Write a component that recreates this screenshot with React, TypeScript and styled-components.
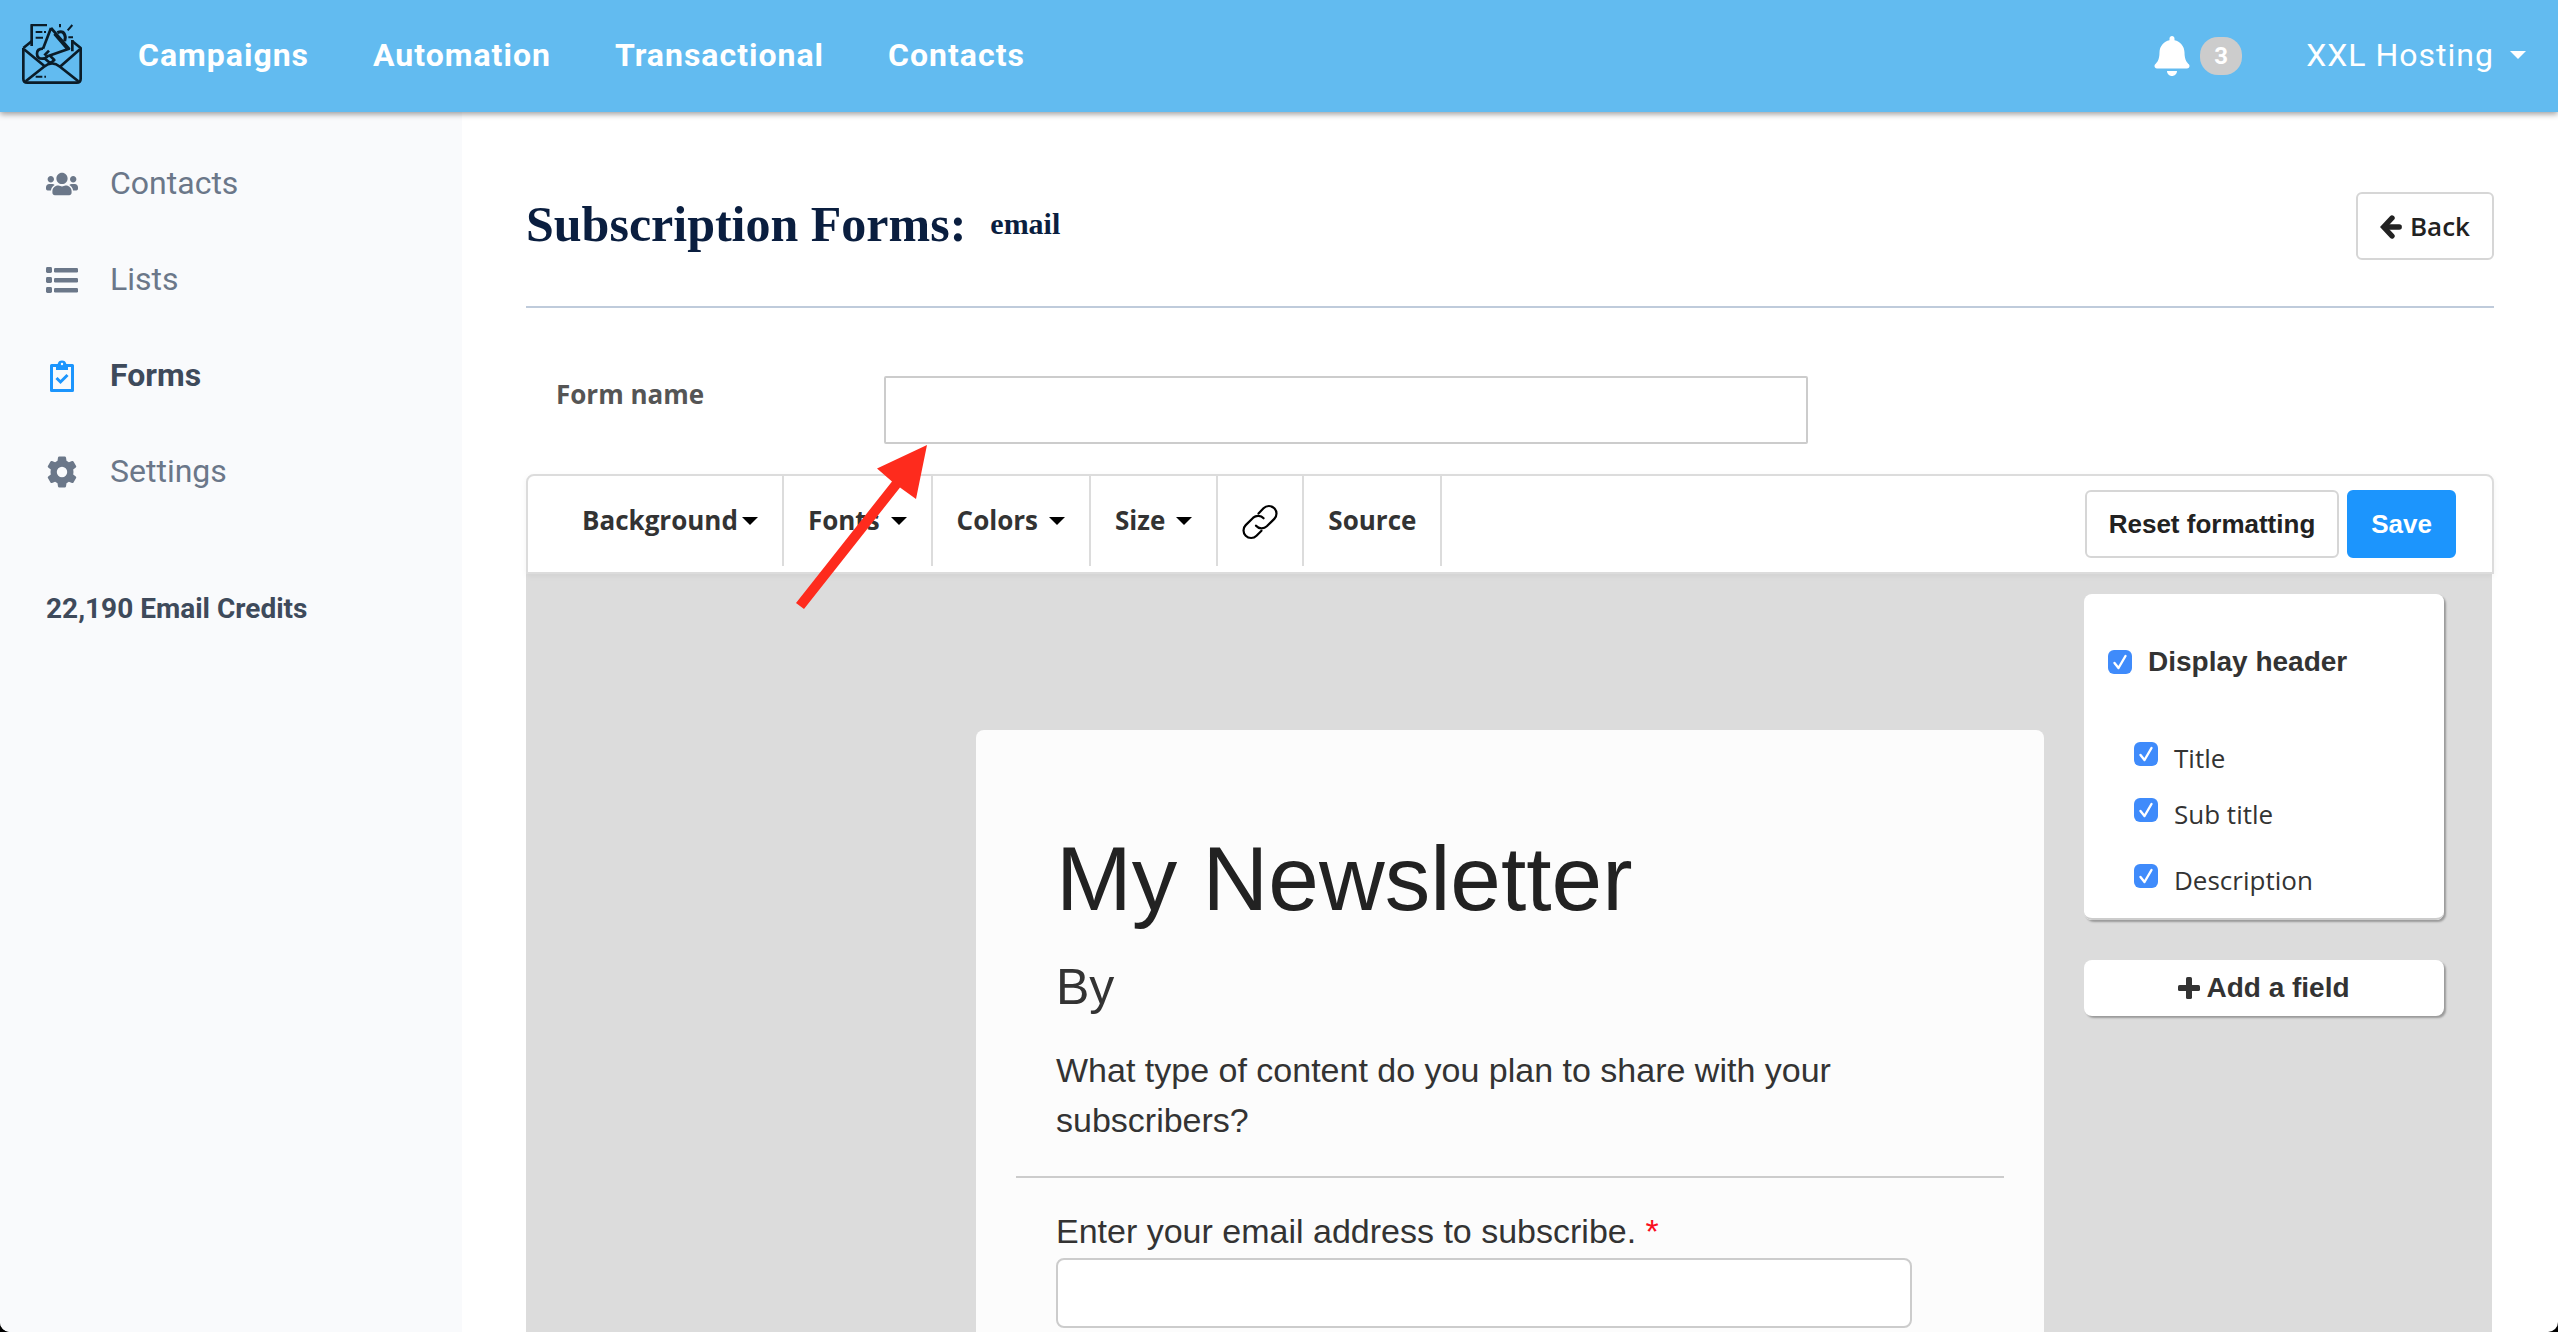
import React from "react";
import styled, { createGlobalStyle, css } from "styled-components";
import { FaUsers, FaBell } from "react-icons/fa";

const roboto = `Roboto, "Noto Sans", sans-serif`;
const openSans = `"Open Sans", "Noto Sans", sans-serif`;
const helvetica = `"Liberation Sans", Arial, sans-serif`;
const serif = `"Liberation Serif", "Times New Roman", serif`;

const GlobalStyle = createGlobalStyle`
  *, *::before, *::after { box-sizing: border-box; }
  html { background: #000; }
  body { margin: 0; font-family: ${openSans}; color: #333; overflow: hidden; }
  h1, h2, p { margin: 0; font-weight: 400; }
  button, input { font: inherit; color: inherit; margin: 0; }
`;

const Page = styled.div`
  position: relative;
  display: flex;
  flex-direction: column;
  height: 100vh;
  background: #fff;
  border-radius: 0 0 10px 10px;
  overflow: hidden;
`;

const TopBar = styled.header`
  position: relative;
  z-index: 2;
  flex: none;
  display: flex;
  align-items: center;
  height: 112px;
  padding: 0 32px 0 20px;
  background: #62bbf0;
  color: #fff;
  font-family: ${roboto};
  font-size: 32px;
  line-height: 40px;
  letter-spacing: 1px;
  box-shadow: 0 2px 6px rgba(0, 0, 0, 0.4);
`;

const Logo = styled.svg`
  display: block;
  width: 64px;
  height: 64px;
`;

const MainNav = styled.nav`
  display: flex;
  gap: 64px;
  margin-left: 54px;
  padding-bottom: 2px;
`;

const NavLink = styled.a`
  color: inherit;
  font-weight: 700;
  text-decoration: none;
`;

const Account = styled.div`
  display: flex;
  align-items: center;
  margin-left: auto;
`;

const AlertsButton = styled.button`
  display: flex;
  align-items: center;
  gap: 10px;
  padding: 0;
  border: 0;
  background: none;

  svg { width: 36px; height: 40px; }
`;

const Badge = styled.span`
  width: 42px;
  border-radius: 18px;
  background: #ccc;
  font-size: 24px;
  font-weight: 700;
  line-height: 38px;
  letter-spacing: 0;
  text-align: center;
`;

const AccountButton = styled.button`
  display: flex;
  align-items: center;
  gap: 16px;
  margin-left: 64px;
  padding: 0 0 2px;
  border: 0;
  background: none;
  font-weight: 400;
  letter-spacing: 1px;
`;

const Caret = styled.span`
  width: 0;
  height: 0;
  border: 8px solid transparent;
  border-top-color: currentColor;
  border-bottom-width: 0;
`;

const Body = styled.div`
  flex: 1;
  display: flex;
  min-height: 0;
`;

const Sidebar = styled.aside`
  flex: none;
  width: 462px;
  padding: 47px 46px;
  background: #f9fafc;
  font-family: ${roboto};
`;

const SideNav = styled.nav`
  display: flex;
  flex-direction: column;
  gap: 48px;
`;

const SideLink = styled.a<{ $active?: boolean }>`
  display: flex;
  align-items: center;
  gap: 32px;
  color: ${(p) => (p.$active ? "#3e4a5b" : "#6b7789")};
  font-size: 32px;
  line-height: 48px;
  font-weight: ${(p) => (p.$active ? 700 : 400)};
  text-decoration: none;

  svg {
    width: 32px;
    height: 32px;
    margin-top: 2px;
    color: ${(p) => (p.$active ? "#1c95fd" : "inherit")};
  }
`;

const Credits = styled.p`
  margin-top: 94px;
  color: #3e4a5b;
  font-size: 28px;
  line-height: 40px;
  font-weight: 700;
`;

const Main = styled.main`
  flex: 1;
  display: flex;
  flex-direction: column;
  min-width: 0;
  padding: 80px 64px 0;
`;

const PageHead = styled.div`
  flex: none;
  display: flex;
  align-items: flex-start;
  justify-content: space-between;
  padding-bottom: 46px;
  border-bottom: 2px solid #bfcbdb;
`;

const Heading = styled.div`
  display: flex;
  align-items: center;
  gap: 24px;
  color: #0a1e3f;
  font-family: ${serif};
`;

const PageTitle = styled.h1`
  font-size: 50px;
  line-height: 64px;
  font-weight: 700;
`;

const PageSubtitle = styled.h2`
  font-size: 30px;
  line-height: 64px;
  font-weight: 700;
`;

const Button = styled.button<{ $primary?: boolean }>`
  display: flex;
  align-items: center;
  gap: 8px;
  height: 68px;
  padding: 0 22px;
  border: 2px solid ${(p) => (p.$primary ? "#1c95fd" : "#d6d6d6")};
  border-radius: 6px;
  background: ${(p) => (p.$primary ? "#1c95fd" : "#fff")};
  color: ${(p) => (p.$primary ? "#fff" : "#222")};
  font-family: ${helvetica};
  font-size: 26px;
  font-weight: 700;
  white-space: nowrap;
`;

const BackButton = styled(Button)`
  font-family: ${openSans};
  font-weight: 600;

  svg { width: 22px; height: 24px; margin-top: 2px; }
`;

const NameRow = styled.div`
  flex: none;
  display: grid;
  grid-template-columns: 328px minmax(0, 924px);
  padding: 68px 0 30px 30px;
`;

const NameLabel = styled.label`
  color: #555;
  font-size: 26px;
  line-height: 36px;
  font-weight: 700;
`;

const TextInput = styled.input`
  width: 100%;
  height: 68px;
  padding: 0 16px;
  border: 2px solid #ccc;
  border-radius: 2px;
  background: #fff;
  font-size: 28px;
  outline: none;
`;

const Toolbar = styled.div`
  position: relative;
  z-index: 1;
  flex: none;
  display: flex;
  justify-content: space-between;
  height: 100px;
  padding: 0 36px 0 30px;
  border: 2px solid #dcdcdc;
  border-radius: 8px 8px 0 0;
  background: #fff;
  box-shadow: 0 2px 6px rgba(0, 0, 0, 0.05);
`;

const ToolGroup = styled.div`
  display: flex;
  height: 90px;
`;

const Tool = styled.button<{ $tight?: boolean }>`
  display: flex;
  align-items: center;
  gap: ${(p) => (p.$tight ? 4 : 11)}px;
  padding: 0 24px 2px;
  border: 0;
  border-right: 2px solid #dcdcdc;
  background: none;
  font-size: 26px;
  font-weight: 700;

  ${Caret} { margin-top: 2px; color: #000; }
  svg { width: 36px; height: 36px; margin-top: 4px; color: #000; }
`;

const Actions = styled.div`
  display: flex;
  gap: 8px;
  padding-top: 14px;
`;

const Canvas = styled.div`
  flex: 1;
  display: grid;
  grid-template-columns: minmax(0, 1fr) minmax(0, 1068px) minmax(0, 1fr);
  min-height: 0;
  margin-right: 2px;
  padding-left: 2px;
  background: #dcdcdc;
  overflow: hidden;
`;

const FormCard = styled.form`
  grid-column: 2;
  margin-top: 156px;
  padding: 97px 40px 40px;
  border-radius: 8px 8px 0 0;
  background: #fcfcfc;
  font-family: ${helvetica};
`;

const FormIntro = styled.div`
  padding: 0 40px 31px;
  border-bottom: 2px solid #ccc;
`;

const FormTitle = styled.h1`
  color: #222;
  font-size: 91px;
  line-height: 104px;
`;

const FormSubtitle = styled.h2`
  margin-top: 26px;
  font-size: 50px;
  line-height: 60px;
`;

const copy = css`
  font-size: 34px;
  line-height: 50px;
`;

const FormText = styled.p`
  margin-top: 28px;
  ${copy}
`;

const FormField = styled.div`
  display: grid;
  gap: 2px;
  padding: 28px 92px 0 40px;
`;

const FieldLabel = styled.label`
  ${copy}
`;

const Required = styled.span`
  color: #fa0f1e;
`;

const RoundInput = styled(TextInput)`
  height: 70px;
  border-radius: 8px;
`;

const SideColumn = styled.div`
  grid-column: 3;
  justify-self: end;
  width: 360px;
  margin: 20px 48px 0 0;
`;

const OptionsPanel = styled.fieldset`
  display: flex;
  flex-direction: column;
  margin: 0;
  padding: 48px 24px 22px;
  border: 0;
  border-bottom: 2px solid #ccc;
  border-radius: 8px;
  background: #fff;
  box-shadow: 2px 2px 2px rgba(0, 0, 0, 0.3);
`;

const Check = styled.label<{ $head?: boolean; $gap?: number }>`
  display: flex;
  align-items: ${(p) => (p.$head ? "center" : "flex-start")};
  gap: 16px;
  margin-left: ${(p) => (p.$head ? 0 : 26)}px;
  margin-top: ${(p) => p.$gap ?? 0}px;
  font-family: ${(p) => (p.$head ? helvetica : openSans)};
  font-size: ${(p) => (p.$head ? 28 : 26)}px;
  line-height: ${(p) => (p.$head ? 40 : 32)}px;
  font-weight: ${(p) => (p.$head ? 700 : 400)};
`;

const TickBox = styled.span`
  position: relative;
  flex: none;
  width: 24px;
  height: 24px;

  input {
    display: block;
    appearance: none;
    width: 24px;
    height: 24px;
    border-radius: 6px;
    background: #3f8bfb;
  }

  svg {
    position: absolute;
    inset: 0;
    width: 24px;
    height: 24px;
    pointer-events: none;
  }
`;

const AddField = styled.button`
  display: flex;
  align-items: center;
  justify-content: center;
  gap: 6px;
  width: 100%;
  height: 56px;
  margin-top: 40px;
  border: 0;
  border-radius: 8px;
  background: #fff;
  font-family: ${helvetica};
  font-size: 28px;
  font-weight: 700;
  box-shadow: 2px 2px 2px rgba(0, 0, 0, 0.3);

  svg { width: 22px; height: 22px; }
`;

const PointerArrow = styled.svg`
  position: absolute;
  z-index: 3;
  left: 796px;
  top: 445px;
  width: 131px;
  height: 164px;
  pointer-events: none;
`;

const MailLogo = () => (
  <Logo
    viewBox="15 18 192 192"
    fill="none"
    stroke="#0b1c28"
    strokeWidth="8"
    strokeLinejoin="round"
    role="img"
    aria-label="Mail campaigns"
  >
    <path d="M25 90v92q0 12 12 12h148q12 0 12-12V90L172 70M25 90L50 70" />
    <path d="M27 94l64 52M195 94l-60 52M32 190l55-44q24-20 48 0l55 44" />
    <path d="M50 84V21h46M172 66v34" />
    <path d="M62 42h20M87 42h6M62 59h22M62 176h20M88 176h5" strokeWidth="6" />
    <path d="M108 30l54 62-62 22M108 30L84 92M118 48l40 46" />
    <path d="M127 44q20-10 24 14l-2 12" strokeWidth="9" />
    <path d="M84 92q-18 0-18 15t16 15q10 0 18-10M90 122l16 14 12-10-14-14M88 112l14-14" />
    <path d="M135 18v10M172 21l-14 16M160 58h14" strokeWidth="6" />
  </Logo>
);

const ListIcon = () => (
  <svg viewBox="0 0 32 32" fill="currentColor" aria-hidden="true">
    {[3, 13, 23].map((y) => (
      <React.Fragment key={y}>
        <rect x="0" y={y} width="6" height="6" rx="1.4" />
        <rect x="8" y={y + 1} width="24" height="4.4" rx="1.2" />
      </React.Fragment>
    ))}
  </svg>
);

const FormIcon = () => (
  <svg viewBox="0 0 32 32" fill="none" stroke="currentColor" aria-hidden="true">
    <path d="M5.5 5.5h21v25h-21z" strokeWidth="3" strokeLinejoin="round" />
    <path d="M10 4.2h3a3.2 3.2 0 0 1 6 0h3V10H10z" fill="currentColor" stroke="none" />
    <path d="M12.8 4.2a3.3 3.3 0 0 1 6.4 0" strokeWidth="2.4" />
    <circle cx="16" cy="4" r="1.2" fill="#f9fafc" stroke="none" />
    <path d="M10.5 18l4 4 7-7" strokeWidth="3" />
  </svg>
);

const GearIcon = () => (
  <svg viewBox="0 0 32 32" fill="currentColor" aria-hidden="true">
    <path
      fillRule="evenodd"
      d="M12 1.5Q12.2.4 13.3.4h5.4q1.1 0 1.300 1.100l.5 3.300 2.400 1.400 3.100-1.200q1-.4 1.500.5l2.600 4.500q.5.900-.3 1.600L27.200 13.600a11 11 0 0 1 0 4.800l2.600 2q.8.700.3 1.600l-2.600 4.500q-.5.900-1.500.5l-3.100-1.200-2.400 1.400-.5 3.300q-.2 1.100-1.300 1.100h-5.400q-1.100 0-1.300-1.100l-.5-3.300-2.400-1.400-3.100 1.200q-1 .4-1.500-.5l-2.600-4.500q-.5-.9.300-1.600l2.600-2a11 11 0 0 1 0-4.800l-2.600-2q-.8-.7-.3-1.600l2.600-4.500q.5-.9 1.500-.5l3.100 1.200 2.400-1.400zM16 10.800a5.200 5.200 0 1 0 0 10.400 5.200 5.200 0 0 0 0-10.400z"
    />
  </svg>
);

const LinkIcon = () => (
  <svg viewBox="1 1 36 36" fill="none" stroke="currentColor" strokeWidth="2.2" strokeLinecap="round" aria-hidden="true">
    <path d="M17.5 10.5L22.5 5.3a7.5 7.5 0 0 1 10.8 0a7.5 7.5 0 0 1 0 10.6l-7.5 7.4a7.5 7.5 0 0 1-10.8-.6" />
    <path d="M20.5 27.8L15.5 32.7a7.5 7.5 0 0 1-10.8 0a7.5 7.5 0 0 1 0-10.6l7.5-7.4a7.5 7.5 0 0 1 10.4.6" />
  </svg>
);

const BackIcon = () => (
  <svg viewBox="0 0 22 24" fill="none" stroke="currentColor" strokeWidth="5.4" aria-hidden="true">
    <path d="M12 3L3.6 12l8.400 9" strokeLinecap="round" strokeLinejoin="miter" />
    <path d="M5 12h14.200" strokeLinecap="round" />
  </svg>
);

const PlusIcon = () => (
  <svg viewBox="0 0 22 22" fill="currentColor" aria-hidden="true">
    <rect x="8" y="0" width="6" height="22" rx="1.6" />
    <rect x="0" y="8" width="22" height="6" rx="1.6" />
  </svg>
);

const Tick = () => (
  <TickBox>
    <input type="checkbox" defaultChecked />
    <svg viewBox="0 0 24 24" fill="none" stroke="#fff" strokeWidth="2.4" strokeLinecap="round" strokeLinejoin="round" aria-hidden="true">
      <path d="M6.5 13l4 5 7-12" />
    </svg>
  </TickBox>
);

export default function App() {
  return (
    <>
      <GlobalStyle />
      <Page>
        <TopBar>
          <MailLogo />
          <MainNav aria-label="Main">
            {["Campaigns", "Automation", "Transactional", "Contacts"].map((item) => (
              <NavLink key={item} href="#">{item}</NavLink>
            ))}
          </MainNav>
          <Account>
            <AlertsButton type="button" aria-label="Notifications">
              <FaBell />
              <Badge>3</Badge>
            </AlertsButton>
            <AccountButton type="button">
              XXL Hosting
              <Caret />
            </AccountButton>
          </Account>
        </TopBar>
        <Body>
          <Sidebar>
            <SideNav aria-label="Section">
              <SideLink href="#"><FaUsers />Contacts</SideLink>
              <SideLink href="#"><ListIcon />Lists</SideLink>
              <SideLink href="#" $active aria-current="page"><FormIcon />Forms</SideLink>
              <SideLink href="#"><GearIcon />Settings</SideLink>
            </SideNav>
            <Credits>22,190 Email Credits</Credits>
          </Sidebar>
          <Main>
            <PageHead>
              <Heading>
                <PageTitle>Subscription Forms:</PageTitle>
                <PageSubtitle>email</PageSubtitle>
              </Heading>
              <BackButton type="button"><BackIcon />Back</BackButton>
            </PageHead>
            <NameRow>
              <NameLabel htmlFor="form-name">Form name</NameLabel>
              <TextInput id="form-name" type="text" />
            </NameRow>
            <Toolbar>
              <ToolGroup>
                <Tool type="button" $tight>Background<Caret /></Tool>
                <Tool type="button">Fonts<Caret /></Tool>
                <Tool type="button">Colors<Caret /></Tool>
                <Tool type="button">Size<Caret /></Tool>
                <Tool type="button" aria-label="Link"><LinkIcon /></Tool>
                <Tool type="button">Source</Tool>
              </ToolGroup>
              <Actions>
                <Button type="button">Reset formatting</Button>
                <Button type="button" $primary>Save</Button>
              </Actions>
            </Toolbar>
            <Canvas>
              <FormCard>
                <FormIntro>
                  <FormTitle>My Newsletter</FormTitle>
                  <FormSubtitle>By</FormSubtitle>
                  <FormText>What type of content do you plan to share with your subscribers?</FormText>
                </FormIntro>
                <FormField>
                  <FieldLabel htmlFor="email">
                    Enter your email address to subscribe. <Required>*</Required>
                  </FieldLabel>
                  <RoundInput id="email" type="email" />
                </FormField>
              </FormCard>
              <SideColumn>
                <OptionsPanel>
                  <Check $head><Tick />Display header</Check>
                  <Check $gap={60}><Tick />Title</Check>
                  <Check $gap={24}><Tick />Sub title</Check>
                  <Check $gap={34}><Tick />Description</Check>
                </OptionsPanel>
                <AddField type="button"><PlusIcon />Add a field</AddField>
              </SideColumn>
            </Canvas>
          </Main>
        </Body>
        <PointerArrow viewBox="0 0 131 164" aria-hidden="true">
          <path d="M131 0L120 54 104 42.5 8 164 0 158 96 36.5 81 23.5z" fill="#fe2b1d" />
        </PointerArrow>
      </Page>
    </>
  );
}
